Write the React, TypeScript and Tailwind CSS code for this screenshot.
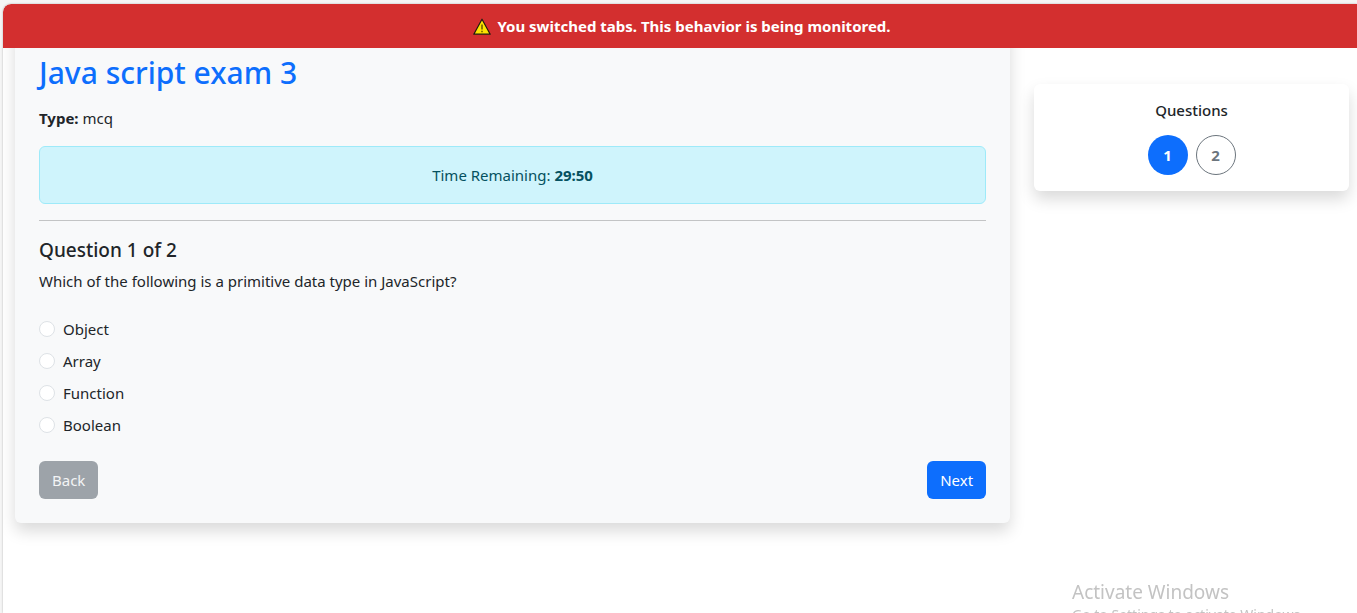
import { useState } from "react";

const options = ["Object", "Array", "Function", "Boolean"];

function WarningIcon() {
  return (
    <svg viewBox="0 0 18 17" className="h-[17px] w-[18px] shrink-0" aria-hidden="true">
      <path d="M9 1.2 17.2 16.2H0.8Z" fill="#fde300" stroke="#1f1a10" strokeWidth="1.2" strokeLinejoin="round" />
      <path d="M9 6.6v5M9 12.8v1.5" stroke="#5a4d00" strokeWidth="1.4" fill="none" />
    </svg>
  );
}

function Banner() {
  return (
    <div
      role="alert"
      className="relative z-10 flex h-11 items-center justify-center gap-[6px] rounded-tl-lg bg-[#d32f2f] pl-1 font-bold text-white"
    >
      <WarningIcon />
      <span>You switched tabs. This behavior is being monitored.</span>
    </div>
  );
}

function ExamCard() {
  const [answer, setAnswer] = useState("");
  return (
    <main className="-mt-6 rounded-md bg-[#f8f9fa] px-6 pt-[30px] pb-6 shadow-[0_8px_16px_rgba(0,0,0,0.15)]">
      <h1 className="mb-3.5 text-[30px] leading-[38px] font-medium text-[#0d6efd]">Java script exam 3</h1>
      <p className="mb-4">
        <strong>Type:</strong> mcq
      </p>
      <div className="mb-4 rounded-md border border-[#9eeaf9] bg-[#cff4fc] p-4 text-center text-[#055160]">
        Time Remaining: <strong>29:50</strong>
      </div>
      <hr className="mb-4 border-[#c3c4c5]" />
      <h2 className="mb-1.5 text-[19px] leading-[26px] font-medium">Question 1 of 2</h2>
      <fieldset>
        <legend className="mb-6">Which of the following is a primitive data type in JavaScript?</legend>
        <div className="mb-6 flex flex-col gap-2">
          {options.map((option) => (
            <label key={option} className="flex items-center gap-2 self-start">
              <input
                type="radio"
                name="answer"
                value={option}
                checked={answer === option}
                onChange={() => setAnswer(option)}
                className="size-4 appearance-none rounded-full border border-[#dee2e6] bg-white checked:border-[5px] checked:border-[#0d6efd]"
              />
              {option}
            </label>
          ))}
        </div>
      </fieldset>
      <div className="flex justify-between">
        <button type="button" disabled className="rounded-md bg-[#9da3a9] px-[13px] py-[7px] text-[#f3f4f5]">
          Back
        </button>
        <button type="button" className="rounded-md bg-[#0d6efd] px-[13px] py-[7px] text-white">
          Next
        </button>
      </div>
    </main>
  );
}

function QuestionNav() {
  return (
    <aside className="mt-9 rounded-md bg-white p-4 text-center shadow-[0_8px_16px_rgba(0,0,0,0.15)]">
      <h2 className="mb-3.5 leading-[21px] font-medium">Questions</h2>
      <div className="flex justify-center gap-2">
        <button type="button" className="size-10 rounded-full bg-[#0d6efd] font-bold text-white">
          1
        </button>
        <button type="button" className="size-10 rounded-full border border-[#6c757d] font-bold text-[#6c757d]">
          2
        </button>
      </div>
    </aside>
  );
}

export default function App() {
  return (
    <div className="h-screen overflow-hidden bg-[#f5f5f5] pt-1 pl-[3px] font-['Noto_Sans','Open_Sans',sans-serif] text-[15px] leading-6 text-[#212529]">
      <div className="h-full overflow-hidden rounded-tl-lg bg-white shadow-[0_0_2px_rgba(0,0,0,0.3)]">
        <Banner />
        <div className="grid grid-cols-[79fr_25fr] items-start gap-6 pr-2 pl-3">
          <ExamCard />
          <QuestionNav />
        </div>
      </div>
      <div className="pointer-events-none fixed right-[50px] bottom-0 h-[34px] w-[235px] overflow-hidden whitespace-nowrap text-[#c3c3c3]">
        <p className="text-[19px] leading-[26px]">Activate Windows</p>
        <p className="text-[14px] leading-5">Go to Settings to activate Windows.</p>
      </div>
    </div>
  );
}
